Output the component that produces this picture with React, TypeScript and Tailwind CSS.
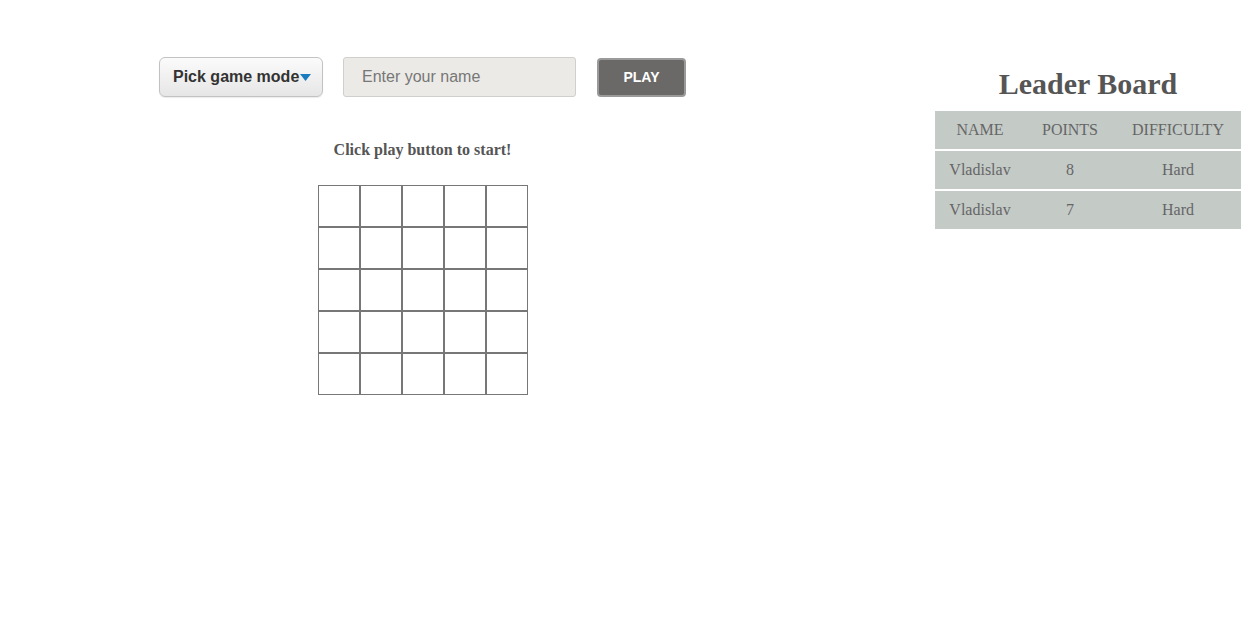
import { useState } from 'react'

const leaders = [
  { name: 'Vladislav', points: 8, difficulty: 'Hard' },
  { name: 'Vladislav', points: 7, difficulty: 'Hard' },
]

export default function App() {
  const [name, setName] = useState('')
  const cells = Array.from({ length: 25 })

  return (
    <div className="flex w-[1256px] min-h-[625px] bg-white">
      {/* Game area */}
      <div className="flex w-[845px] flex-col items-center pt-[57px]">
        <div className="flex items-start">
          <button className="flex h-[40px] w-[164px] items-center rounded-[6px] border border-[#c2c2c2] bg-gradient-to-b from-[#fbfbfb] to-[#e6e6e6] pl-[13px] font-['Liberation_Sans',Arial,sans-serif] text-[16px] font-bold text-[#333] shadow-[0_1px_1px_rgba(0,0,0,0.08)]">
            Pick game mode
            <svg width="11" height="7" viewBox="0 0 11 7" className="ml-[1px] mt-[1px]">
              <path d="M0 0 L11 0 L5.5 7 Z" fill="#1a7cc0" />
            </svg>
          </button>
          <input
            value={name}
            onChange={(e) => setName(e.target.value)}
            placeholder="Enter your name"
            className="ml-[20px] h-[40px] w-[233px] rounded-[3px] border border-[#d0cfcb] bg-[#ebeae6] pl-[18px] font-['Liberation_Sans',Arial,sans-serif] text-[16px] text-[#333] placeholder:text-[#777] focus:outline-none"
          />
          <button className="ml-[21px] mt-[1px] h-[39px] w-[89px] rounded-[4px] border-2 border-[#9a9a9a] bg-[#6a6968] font-['Liberation_Sans',Arial,sans-serif] text-[14px] font-bold text-white">
            PLAY
          </button>
        </div>

        <p className="mt-[42px] font-['Liberation_Serif','Times_New_Roman',serif] text-[16px] font-bold leading-[22px] text-[#555]">
          Click play button to start!
        </p>

        <div className="mt-[24px] grid grid-cols-5">
          {cells.map((_, i) => (
            <div key={i} className="h-[42px] w-[42px] border border-[#777]" />
          ))}
        </div>
      </div>

      {/* Leader board */}
      <div className="ml-[90px] w-[306px] pt-[66px]">
        <h1 className="text-center font-['Liberation_Serif','Times_New_Roman',serif] text-[30px] font-bold leading-[36px] text-[#555]">
          Leader Board
        </h1>
        <div className="mt-[9px] flex flex-col gap-[2px] font-['Liberation_Serif','Times_New_Roman',serif] text-[16px] text-[#666]">
          <div className="flex h-[38px] items-center bg-[#c4cac6] uppercase">
            <span className="w-[90px] text-center">Name</span>
            <span className="w-[90px] text-center">Points</span>
            <span className="flex-1 text-center">Difficulty</span>
          </div>
          {leaders.map((row, i) => (
            <div key={i} className="flex h-[38px] items-center bg-[#c4cac6]">
              <span className="w-[90px] text-center">{row.name}</span>
              <span className="w-[90px] text-center">{row.points}</span>
              <span className="flex-1 text-center">{row.difficulty}</span>
            </div>
          ))}
        </div>
      </div>
    </div>
  )
}
